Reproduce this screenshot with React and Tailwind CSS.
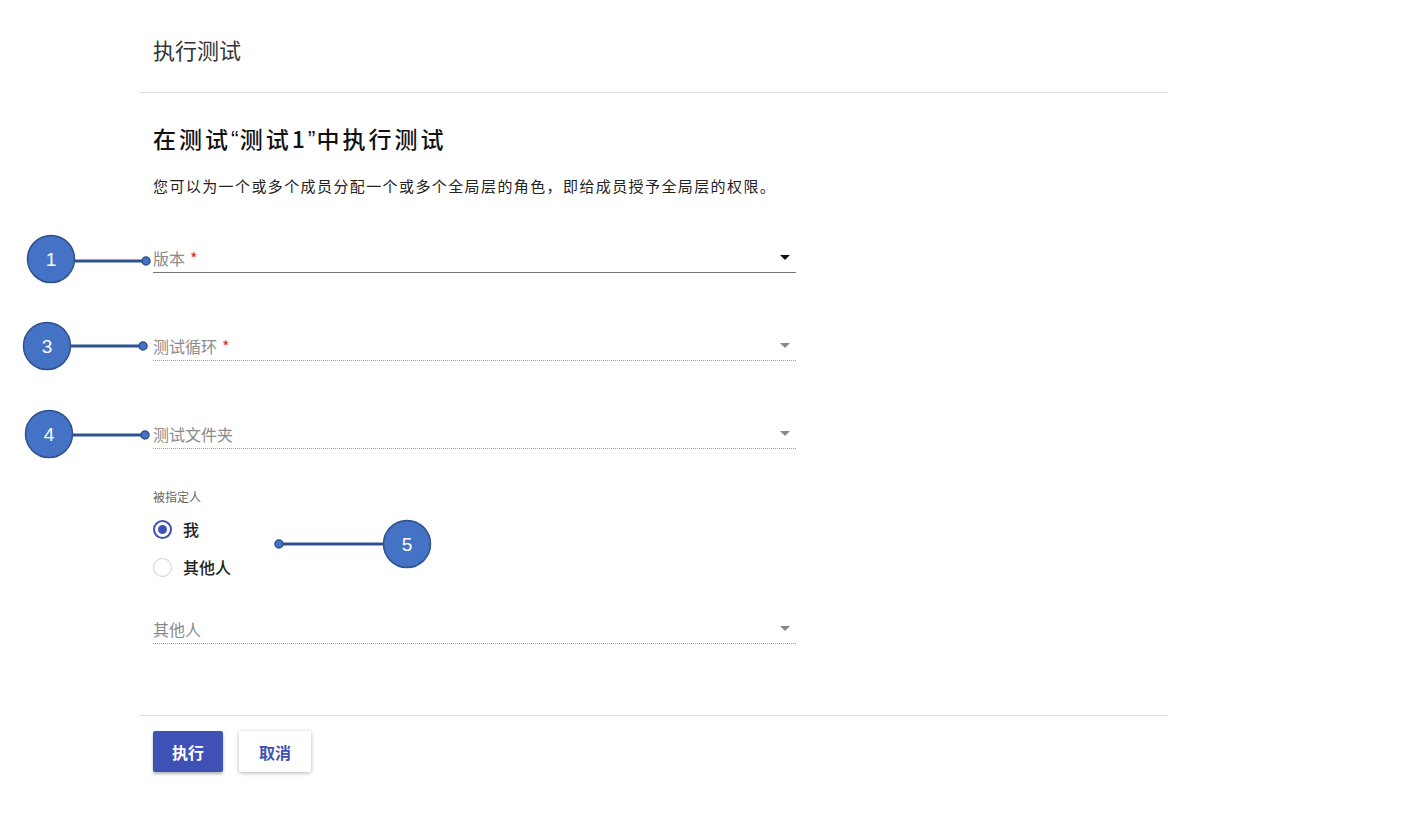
import React from 'react';

const font = { fontFamily: '"Noto Sans CJK SC", "Noto Sans", sans-serif' };

const Arrow = ({ dark }) => (
  <svg width="10" height="6" viewBox="0 0 10 6" className="shrink-0">
    <path d="M0 0h10L5 5z" fill={dark ? '#111' : '#8a8a8a'} />
  </svg>
);

const SelectField = ({ label, required, active, className }) => (
  <div
    className={`w-[643px] flex items-center justify-between pb-[4px] ${
      active ? 'border-b border-[#757575]' : 'border-b border-dotted border-[#9e9e9e]'
    } ${className}`}
  >
    <span className="text-[16px] leading-[20px] text-[#8a8a8a]">
      {label}
      {required && <span className="text-[#d32f2f] ml-[5px]">*</span>}
    </span>
    <span className="mr-[6px]">
      <Arrow dark={active} />
    </span>
  </div>
);

const Radio = ({ checked, label, className }) => (
  <div className={`flex items-center h-[24px] ${className}`}>
    <span
      className={`w-[19px] h-[19px] rounded-full flex items-center justify-center ${
        checked ? 'border-2 border-[#3f51b5]' : 'border border-[#cfcfcf]'
      }`}
    >
      {checked && <span className="w-[9px] h-[9px] rounded-full bg-[#3f51b5]" />}
    </span>
    <span className="ml-[11px] text-[16px] text-[#222] font-medium">{label}</span>
  </div>
);

const callouts = [
  { n: '1', cx: 51, cy: 259, x2: 146, y: 261 },
  { n: '3', cx: 47, cy: 346, x2: 143, y: 346 },
  { n: '4', cx: 49, cy: 434, x2: 145, y: 435 },
];

const Annotations = () => (
  <svg className="absolute inset-0 pointer-events-none" width="1404" height="832">
    {callouts.map((c) => (
      <g key={c.n}>
        <line x1={c.cx + 24} y1={c.y} x2={c.x2} y2={c.y} stroke="#2f528f" strokeWidth="3" />
        <circle cx={c.x2} cy={c.y} r="4" fill="#4472c4" stroke="#2f528f" strokeWidth="1.5" />
        <circle cx={c.cx} cy={c.cy} r="23.5" fill="#4472c4" stroke="#2f528f" strokeWidth="1.5" />
        <text x={c.cx} y={c.cy + 7} textAnchor="middle" fill="#fff" fontSize="19" fontFamily="Liberation Sans, sans-serif">
          {c.n}
        </text>
      </g>
    ))}
    <g>
      <line x1="279" y1="544" x2="384" y2="544" stroke="#2f528f" strokeWidth="3" />
      <circle cx="279" cy="544" r="4" fill="#4472c4" stroke="#2f528f" strokeWidth="1.5" />
      <circle cx="407" cy="544" r="23.5" fill="#4472c4" stroke="#2f528f" strokeWidth="1.5" />
      <text x="407" y="551" textAnchor="middle" fill="#fff" fontSize="19" fontFamily="Liberation Sans, sans-serif">
        5
      </text>
    </g>
  </svg>
);

const Quote = ({ children }) => (
  <span className="tracking-[1px]" style={{ fontFamily: '"Liberation Sans", sans-serif' }}>
    {children}
  </span>
);

export default function App() {
  return (
    <div className="relative w-[1404px] h-[832px] bg-white overflow-hidden" style={font}>
      <div className="ml-[140px] w-[1028px]">
        <div className="h-[93px] border-b border-[#e0e0e0] pl-[13px] pt-[34px]">
          <h1 className="text-[22px] leading-[30px] text-[#333]">执行测试</h1>
        </div>

        <div className="pl-[13px] border-b border-[#e0e0e0] pb-[71px]">
          <h2 className="mt-[30px] text-[23px] leading-[30px] font-medium tracking-[3px] text-[#111]">
            在测试<Quote>“</Quote>测试1<Quote>”</Quote>中执行测试
          </h2>
          <p className="mt-[21px] text-[15px] leading-[20px] tracking-[1.4px] text-[#222]">
            您可以为一个或多个成员分配一个或多个全局层的角色，即给成员授予全局层的权限。
          </p>

          <SelectField label="版本" required active className="mt-[52px]" />
          <SelectField label="测试循环" required className="mt-[63px]" />
          <SelectField label="测试文件夹" className="mt-[63px]" />

          <div className="mt-[40px] text-[12px] leading-[16px] text-[#666]">被指定人</div>
          <Radio checked label="我" className="mt-[12px]" />
          <Radio label="其他人" className="mt-[14px]" />

          <SelectField label="其他人" className="mt-[40px]" />
        </div>

        <div className="pl-[13px] pt-[15px] flex gap-[16px]">
          <button className="w-[70px] h-[41px] rounded-[2px] bg-[#3f51b5] text-white text-[16px] font-bold shadow-[0_2px_3px_rgba(0,0,0,0.3)]">
            执行
          </button>
          <button className="w-[72px] h-[41px] rounded-[2px] bg-white text-[#3f51b5] text-[16px] font-bold shadow-[0_1px_4px_rgba(0,0,0,0.3)]">
            取消
          </button>
        </div>
      </div>
      <Annotations />
    </div>
  );
}
